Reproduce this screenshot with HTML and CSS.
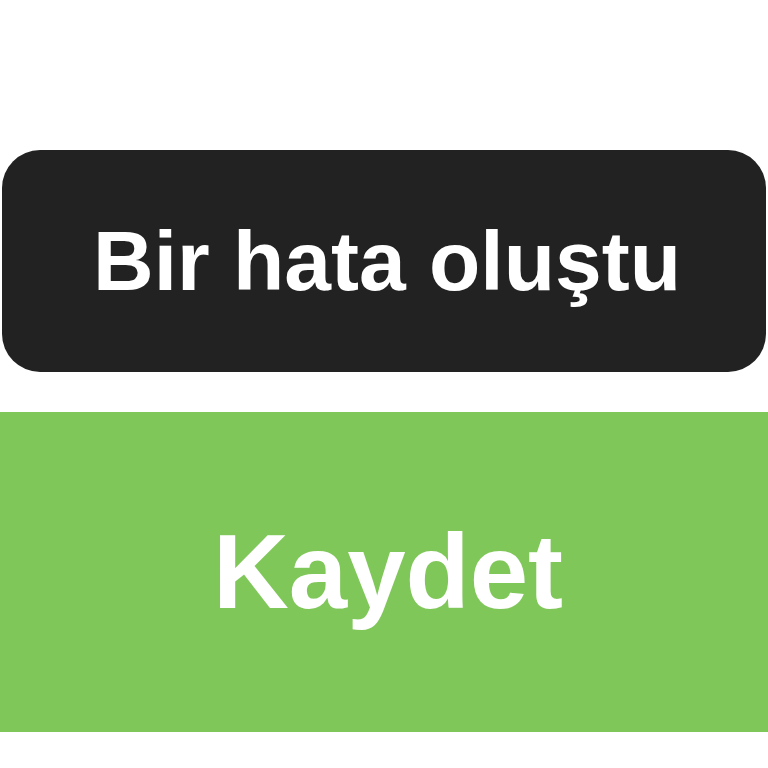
FILE: index.html
```html
<!DOCTYPE html>
<html lang="tr">
<head>
<meta charset="utf-8">
<link rel="stylesheet" href="styles.css">
</head>
<body>
<div class="page">
  <div class="toast">Bir hata oluştu</div>
  <button class="save">Kaydet</button>
</div>
</body>
</html>
```
FILE: styles.css
```css
html, body {
  margin: 0;
  padding: 0;
  background: #ffffff;
}
.page {
  display: flex;
  flex-direction: column;
  padding-top: 150px;
  font-family: "Liberation Sans", Arial, sans-serif;
}
.toast {
  margin: 0 2px;
  height: 222px;
  background: #222222;
  border-radius: 38px;
  color: #ffffff;
  font-weight: 700;
  font-size: 84px;
  padding-left: 6px;
  display: flex;
  align-items: center;
  justify-content: center;
}
.save {
  margin-top: 40px;
  height: 320px;
  border: none;
  background: #80c75a;
  color: #ffffff;
  font-family: inherit;
  font-weight: 700;
  font-size: 105px;
  padding: 0 0 0 8px;
  display: flex;
  align-items: center;
  justify-content: center;
}
```
